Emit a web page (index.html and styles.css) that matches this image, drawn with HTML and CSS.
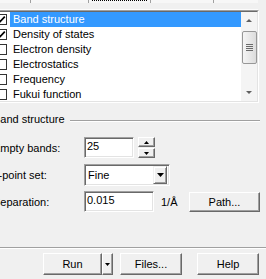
FILE: index.html
```html
<!DOCTYPE html>
<html lang="en">
<head>
    <meta charset="UTF-8">
    <title>Properties</title>
    <link rel="stylesheet" href="styles.css">
</head>
<body>
<div class="page">
    <div class="tabs">
        <span class="tab tab-1"></span>
        <span class="tab tab-2"></span>
        <span class="tab tab-3"><span class="focus"></span></span>
        <span class="tab tab-4"></span>
        <span class="tab tab-rest"></span>
    </div>

    <div class="list">
        <div class="list-inner">
            <ul class="items">
                <li class="item selected">
                    <span class="check"><svg width="9" height="9" viewBox="0 0 9 9"><path d="M1 4.2 L3.2 6.6 L7.8 1.6" fill="none" stroke="#000" stroke-width="1.7"/></svg></span>
                    <span class="label">Band structure</span>
                </li>
                <li class="item">
                    <span class="check"><svg width="9" height="9" viewBox="0 0 9 9"><path d="M1 4.2 L3.2 6.6 L7.8 1.6" fill="none" stroke="#000" stroke-width="1.7"/></svg></span>
                    <span class="label">Density of states</span>
                </li>
                <li class="item"><span class="check"></span><span class="label">Electron density</span></li>
                <li class="item"><span class="check"></span><span class="label">Electrostatics</span></li>
                <li class="item"><span class="check"></span><span class="label">Frequency</span></li>
                <li class="item"><span class="check"></span><span class="label">Fukui function</span></li>
            </ul>
            <div class="scrollbar">
                <div class="sb-btn"><span class="arrow-up"></span></div>
                <div class="thumb">
                    <span class="grip"></span><span class="grip"></span><span class="grip"></span><span class="grip"></span>
                </div>
                <div class="sb-track"></div>
                <div class="sb-btn"><span class="arrow-down"></span></div>
            </div>
        </div>
    </div>

    <div class="legend">
        <span>Band structure</span>
        <span class="legend-line"></span>
    </div>

    <div class="form">
        <div class="form-row">
            <span class="form-label">Empty bands:</span>
            <div class="textbox short">25</div>
            <div class="spin">
                <span class="spin-btn"><svg width="5" height="3" viewBox="0 0 5 3"><polygon points="2.5,0 5,3 0,3" fill="#000"/></svg></span>
                <span class="spin-btn"><svg width="5" height="3" viewBox="0 0 5 3"><polygon points="0,0 5,0 2.5,3" fill="#000"/></svg></span>
            </div>
        </div>
        <div class="form-row tall">
            <span class="form-label">k-point set:</span>
            <div class="combo">
                <span class="combo-text">Fine</span>
                <span class="combo-btn"><svg width="7" height="4" viewBox="0 0 7 4"><polygon points="0,0 7,0 3.5,4" fill="#000"/></svg></span>
            </div>
        </div>
        <div class="form-row">
            <span class="form-label">Separation:</span>
            <div class="textbox wide">0.015</div>
            <span class="unit">1/Å</span>
            <button class="btn path">Path...</button>
        </div>
    </div>

    <div class="footer-sep"></div>
    <div class="footer">
        <button class="btn run">Run</button>
        <button class="btn drop"><svg width="5" height="3" viewBox="0 0 5 3"><polygon points="0,0 5,0 2.5,3" fill="#000"/></svg></button>
        <button class="btn files">Files...</button>
        <button class="btn help">Help</button>
    </div>
</div>
</body>
</html>
```

FILE: styles.css
```css
body {
    margin: 0;
    background: #f0f0f0;
    font-family: "Liberation Sans", Arial, sans-serif;
    font-size: 11px;
    color: #000;
    overflow: hidden;
}
.page {
    width: 266px;
    height: 279px;
    overflow: hidden;
}

/* tab strip */
.tabs {
    display: flex;
    height: 9px;
    border-bottom: 1px solid #fcfcfc;
    width: 258px;
}
.tab {
    height: 3px;
    border-right: 1px solid #a0a0a0;
    background: #f7f7f7;
}
.tab-1 { width: 30px; }
.tab-2 { width: 57px; }
.tab-3 { width: 61px; }
.tab-4 { width: 62px; }
.tab-rest { flex: 1; border-right: none; }
.focus {
    display: block;
    margin: 0 3px;
    border-top: 1px dotted #000;
}

/* list with checkboxes */
.list {
    margin-left: -8px;
    width: 265px;
    height: 91px;
    border: 1px solid;
    border-color: #a0a0a0 #fff #fff #a0a0a0;
}
.list-inner {
    display: flex;
    height: 89px;
    border: 1px solid;
    border-color: #696969 #e3e3e3 #e3e3e3 #696969;
    background: #fff;
}
.items {
    flex: 1;
    list-style: none;
    margin: 0;
    padding: 0;
}
.item {
    display: flex;
    align-items: center;
    height: 15px;
}
.check {
    width: 9px;
    height: 9px;
    margin-left: 2px;
    border: 1px solid #333;
    background: #fff;
}
.check svg {
    display: block;
}
.label {
    flex: 1;
    margin-left: 3px;
    padding-left: 3px;
    line-height: 15px;
}
.selected .label {
    background: #3399ff;
    color: #fff;
}

.scrollbar {
    width: 16px;
    display: flex;
    flex-direction: column;
    background: #f4f4f4;
}
.sb-btn {
    height: 17px;
    display: flex;
    align-items: center;
    justify-content: center;
}
.arrow-up {
    border-left: 3px solid transparent;
    border-right: 3px solid transparent;
    border-bottom: 3px solid #606060;
}
.arrow-down {
    border-left: 3px solid transparent;
    border-right: 3px solid transparent;
    border-top: 3px solid #606060;
}
.thumb {
    margin: 2px 0 0 1px;
    height: 31px;
    width: 13px;
    border: 1px solid #979797;
    border-radius: 2px;
    background: linear-gradient(to right, #f5f5f5, #e6e6e6 60%, #dcdcdc);
    display: flex;
    flex-direction: column;
    align-items: center;
    justify-content: center;
    gap: 1px;
}
.grip {
    width: 7px;
    height: 1px;
    background: #6a6a6a;
}
.sb-track {
    flex: 1;
}

/* group header */
.legend {
    display: flex;
    align-items: center;
    height: 14px;
    margin: 9px 0 0 -7px;
}
.legend-line {
    flex: 1;
    margin: 3px 6px 0 5px;
    border-top: 1px solid #a0a0a0;
    border-bottom: 1px solid #fff;
}

/* form rows */
.form {
    margin: 11px 0 0 -7px;
}
.form-row {
    display: flex;
    align-items: center;
    height: 21px;
    margin-bottom: 6px;
}
.form-row.tall {
    height: 22px;
    margin-bottom: 5px;
}
.form-label {
    width: 91px;
}
.textbox {
    box-sizing: border-box;
    height: 21px;
    padding-left: 1px;
    line-height: 17px;
    background: #fff;
    border: 1px solid;
    border-color: #a0a0a0 #fff #fff #a0a0a0;
    box-shadow: inset 1px 1px #696969, inset -1px -1px #e3e3e3;
    padding-left: 2px;
}
.textbox.short { width: 50px; }
.textbox.wide { width: 70px; }
.spin {
    display: flex;
    flex-direction: column;
    gap: 1px;
    margin-left: 4px;
}
.spin-btn {
    box-sizing: border-box;
    width: 17px;
    height: 10px;
    display: flex;
    align-items: center;
    justify-content: center;
    border: 1px solid;
    border-color: #fff #696969 #696969 #fff;
    box-shadow: inset -1px -1px #a0a0a0;
}
.spin-btn svg, .btn svg, .combo-btn svg {
    display: block;
}
.combo {
    box-sizing: border-box;
    width: 86px;
    height: 22px;
    display: flex;
    align-items: center;
    background: #fff;
    border: 1px solid;
    border-color: #a0a0a0 #fff #fff #a0a0a0;
    box-shadow: inset 1px 1px #696969, inset -1px -1px #e3e3e3;
    padding: 2px 2px 2px 2px;
}
.combo-text {
    flex: 1;
    padding-left: 1px;
}
.combo-btn {
    box-sizing: border-box;
    width: 14px;
    height: 18px;
    display: flex;
    align-items: center;
    justify-content: center;
    background: #f0f0f0;
    border: 1px solid;
    border-color: #f0f0f0 #696969 #696969 #f0f0f0;
    box-shadow: inset 1px 1px #fff, inset -1px -1px #a0a0a0;
}
.unit {
    width: 28px;
    margin-left: 7px;
}

/* buttons */
.btn {
    box-sizing: border-box;
    height: 22px;
    padding: 0;
    font: inherit;
    color: #000;
    background: #f0f0f0;
    border: 1px solid;
    border-color: #fff #696969 #696969 #fff;
    box-shadow: inset -1px -1px #a0a0a0;
    display: flex;
    align-items: center;
    justify-content: center;
}
.btn.path {
    width: 71px;
    height: 20px;
}

.footer-sep {
    margin-top: 35px;
    border-top: 1px solid #a0a0a0;
    border-bottom: 1px solid #fff;
}
.footer {
    display: flex;
    padding: 4px 0 0 43px;
}
.btn.run { width: 59px; }
.btn.drop { width: 11px; }
.btn.files { width: 62px; margin-left: 7px; }
.btn.help { width: 62px; margin-left: 15px; }
```
